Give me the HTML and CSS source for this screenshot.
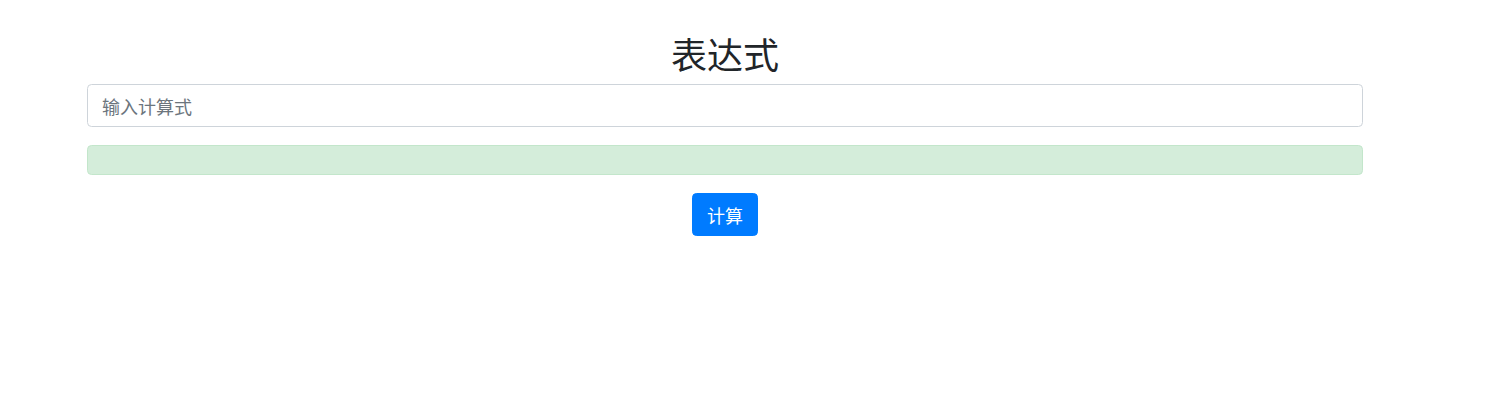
FILE: index.html
```html
<!DOCTYPE html>
<html lang="zh">
<head>
<meta charset="utf-8">
<title>表达式</title>
<link rel="stylesheet" href="styles.css">
</head>
<body>
<div class="page">
  <h2 class="title">表达式</h2>
  <input class="field" type="text" placeholder="输入计算式">
  <div class="result"></div>
  <div class="actions">
    <button class="btn" type="button">计算</button>
  </div>
</div>
</body>
</html>
```

FILE: styles.css
```css
html { font-size: 18px; }
body {
  margin: 0;
  background: #fff;
  color: #212529;
  font-family: "Noto Sans CJK SC", "Liberation Sans", sans-serif;
  line-height: 1.5;
}
.page {
  width: 1276px;
  margin-left: 87px;
  padding-top: 32px;
  display: flex;
  flex-direction: column;
}
.title {
  margin: 0 0 9px;
  font-size: 36px;
  font-weight: 400;
  line-height: 1.2;
  text-align: center;
  color: #212529;
}
.field {
  box-sizing: border-box;
  display: block;
  width: 100%;
  height: 43px;
  padding: 0 14px;
  font-family: inherit;
  font-size: 18px;
  color: #495057;
  background: #fff;
  border: 1px solid #ced4da;
  border-radius: 4.5px;
  margin: 0 0 18px;
  outline: none;
}
.field::placeholder { color: #6c757d; opacity: 1; }
.result {
  box-sizing: border-box;
  height: 30px;
  background: #d4edda;
  border: 1px solid #c3e6cb;
  border-radius: 4.5px;
  margin-bottom: 18px;
}
.actions {
  display: flex;
  justify-content: center;
}
.btn {
  box-sizing: border-box;
  height: 43px;
  width: 66px;
  padding: 0;
  font-family: inherit;
  font-size: 18px;
  color: #fff;
  background: #007bff;
  border: 1px solid #007bff;
  border-radius: 4.5px;
  cursor: pointer;
}
```
